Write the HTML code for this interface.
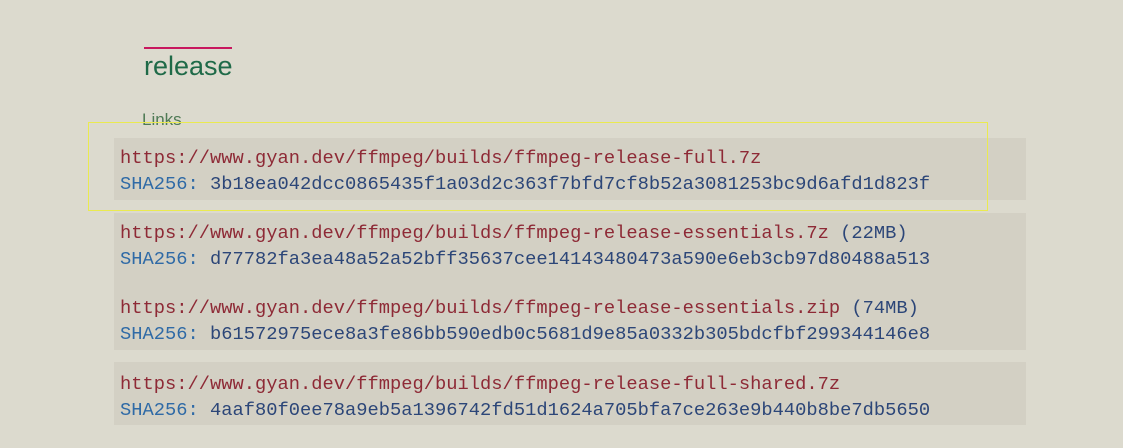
<!DOCTYPE html>
<html><head><meta charset="utf-8"><style>
body{margin:0;width:1123px;height:448px;background:#dcdace;position:relative;overflow:hidden;font-family:"Liberation Sans",sans-serif}
.bar{position:absolute;left:144px;top:47px;width:88px;height:2px;background:#c8175e}
.h{position:absolute;left:144px;top:51px;font-size:27px;color:#1f6a48}
.l{position:absolute;left:142px;top:110px;font-size:17px;color:#4f7a55}
.box{position:absolute;left:114px;width:912px;background:#d3d0c4}
.t{position:absolute;left:120px;font-family:"Liberation Mono",monospace;font-size:18.75px;white-space:pre;line-height:24px}
.r{color:#8e2a36}.s{color:#2f6aa6}.k{color:#2c4678}
.y{position:absolute;left:88px;top:122px;width:898px;height:87px;border:1px solid #eaea50}
</style></head><body>
<div class="bar"></div><div class="h">release</div><div class="l">Links</div>
<div class="box" style="top:138px;height:62px"></div>
<div class="box" style="top:213px;height:137px"></div>
<div class="box" style="top:362px;height:63px"></div>
<div class="t r" style="top:146px">https://www.gyan.dev/ffmpeg/builds/ffmpeg-release-full.7z</div>
<div class="t" style="top:172px"><span class="s">SHA256:</span><span class="k"> 3b18ea042dcc0865435f1a03d2c363f7bfd7cf8b52a3081253bc9d6afd1d823f</span></div>
<div class="t" style="top:221px"><span class="r">https://www.gyan.dev/ffmpeg/builds/ffmpeg-release-essentials.7z</span><span class="k"> (22MB)</span></div>
<div class="t" style="top:247px"><span class="s">SHA256:</span><span class="k"> d77782fa3ea48a52a52bff35637cee14143480473a590e6eb3cb97d80488a513</span></div>
<div class="t" style="top:296px"><span class="r">https://www.gyan.dev/ffmpeg/builds/ffmpeg-release-essentials.zip</span><span class="k"> (74MB)</span></div>
<div class="t" style="top:322px"><span class="s">SHA256:</span><span class="k"> b61572975ece8a3fe86bb590edb0c5681d9e85a0332b305bdcfbf299344146e8</span></div>
<div class="t r" style="top:372px">https://www.gyan.dev/ffmpeg/builds/ffmpeg-release-full-shared.7z</div>
<div class="t" style="top:398px"><span class="s">SHA256:</span><span class="k"> 4aaf80f0ee78a9eb5a1396742fd51d1624a705bfa7ce263e9b440b8be7db5650</span></div>
<div class="y"></div>
</body></html>
